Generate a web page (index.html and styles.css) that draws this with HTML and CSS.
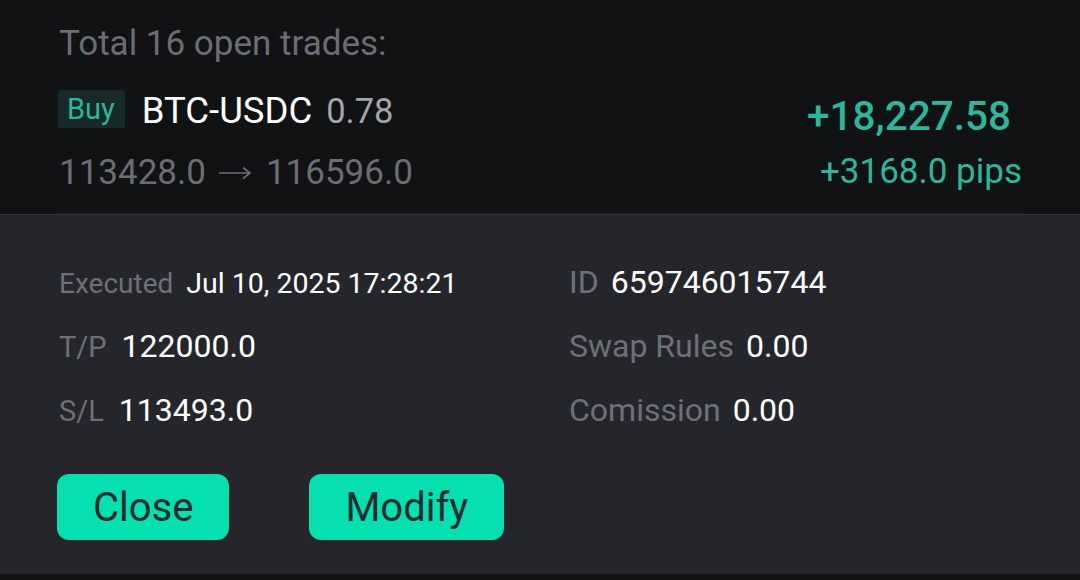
FILE: index.html
```html
<!DOCTYPE html>
<html>
<head>
    <title>Open Trades</title>
    <link rel="stylesheet" href="styles.css">
</head>
<body>
    <div class="trade">
        <div class="total">Total 16 open trades:</div>
        <div class="trade-row">
            <div class="trade-left">
                <div class="pair-line">
                    <span class="side">Buy</span>
                    <span class="symbol">BTC-USDC</span>
                    <span class="volume">0.78</span>
                </div>
                <div class="prices">
                    <span>113428.0</span>
                    <svg class="arrow" width="34" height="14" viewBox="0 0 34 14">
                        <path d="M1 7H32M25 1.5L32 7L25 12.5" fill="none" stroke="#6b6d72" stroke-width="1.6"/>
                    </svg>
                    <span>116596.0</span>
                </div>
            </div>
            <div class="trade-right">
                <div class="profit">+18,227.58</div>
                <div class="pips">+3168.0 pips</div>
            </div>
        </div>
    </div>

    <div class="details">
        <div class="info-grid">
            <div class="info"><span class="label">Executed</span><span class="value small">Jul 10, 2025 17:28:21</span></div>
            <div class="info"><span class="label right">ID</span><span class="value">659746015744</span></div>
            <div class="info"><span class="label left">T/P</span><span class="value">122000.0</span></div>
            <div class="info"><span class="label right">Swap Rules</span><span class="value">0.00</span></div>
            <div class="info"><span class="label left">S/L</span><span class="value">113493.0</span></div>
            <div class="info"><span class="label right">Comission</span><span class="value">0.00</span></div>
        </div>
        <div class="actions">
            <button class="action-button">Close</button>
            <button class="action-button">Modify</button>
        </div>
    </div>
    <div class="bottom-strip"></div>
</body>
</html>
```

FILE: styles.css
```css
body {
    margin: 0;
    font-family: Roboto, "Noto Sans", sans-serif;
    background-color: #111214;
    color: #fff;
}
.trade {
    height: 214px;
    padding: 0 58px 0 59px;
    box-sizing: border-box;
}
.total {
    padding-top: 23px;
    font-size: 35px;
    line-height: 42px;
    color: #6b6d72;
}
.trade-row {
    display: flex;
    justify-content: space-between;
    border-bottom: 1px solid #1a1b1e;
    height: 149px;
    box-sizing: border-box;
}
.pair-line {
    display: flex;
    align-items: center;
    margin-top: 25px;
    height: 37px;
}
.side {
    background-color: #162a2a;
    color: #2fb59c;
    font-size: 29px;
    line-height: 37px;
    padding: 1px 10px 0 9px;
    border-radius: 3px;
    margin-left: -1px;
    margin-right: 17px;
}
.symbol {
    font-size: 36.5px;
    margin-right: 14px;
    margin-top: 4px;
}
.volume {
    font-size: 34.5px;
    color: #a3a5aa;
    margin-top: 4px;
}
.prices {
    display: flex;
    align-items: center;
    margin-top: 26px;
    font-size: 35px;
    line-height: 40px;
    color: #6b6d72;
}
.arrow {
    margin: 0 14px 0 12px;
}
.trade-right {
    text-align: right;
    color: #2fb59c;
}
.profit {
    margin-top: 27px;
    margin-right: 11px;
    font-size: 40.5px;
    line-height: 48px;
    font-weight: 500;
}
.pips {
    margin-top: 12px;
    font-size: 35px;
    line-height: 40px;
}
.details {
    background-color: #25262c;
    border-top: 1px solid #34353a;
    height: 360px;
    padding: 47px 58px 0 59px;
    box-sizing: border-box;
}
.info-grid {
    display: grid;
    grid-template-columns: 510px 1fr;
    row-gap: 22px;
}
.info {
    font-size: 32px;
    line-height: 41px;
    white-space: nowrap;
}
.label {
    font-size: 28px;
    color: #6e7077;
    margin-right: 13px;
}
.label.left {
    font-size: 29px;
    margin-right: 15px;
}
.label.right {
    font-size: 32px;
    margin-right: 12px;
}
.value {
    font-size: 32px;
    color: #fff;
}
.value.small {
    font-size: 28.5px;
}
.actions {
    display: flex;
    gap: 80px;
    margin-top: 42px;
    margin-left: -2px;
}
.action-button {
    background-color: #06dfb0;
    color: #1c2b2e;
    border: none;
    border-radius: 12px;
    height: 66px;
    padding: 0 36px;
    font-family: Roboto, "Noto Sans", sans-serif;
    font-size: 40px;
    cursor: pointer;
}
.bottom-strip {
    height: 10px;
    background-color: #111214;
}
```
